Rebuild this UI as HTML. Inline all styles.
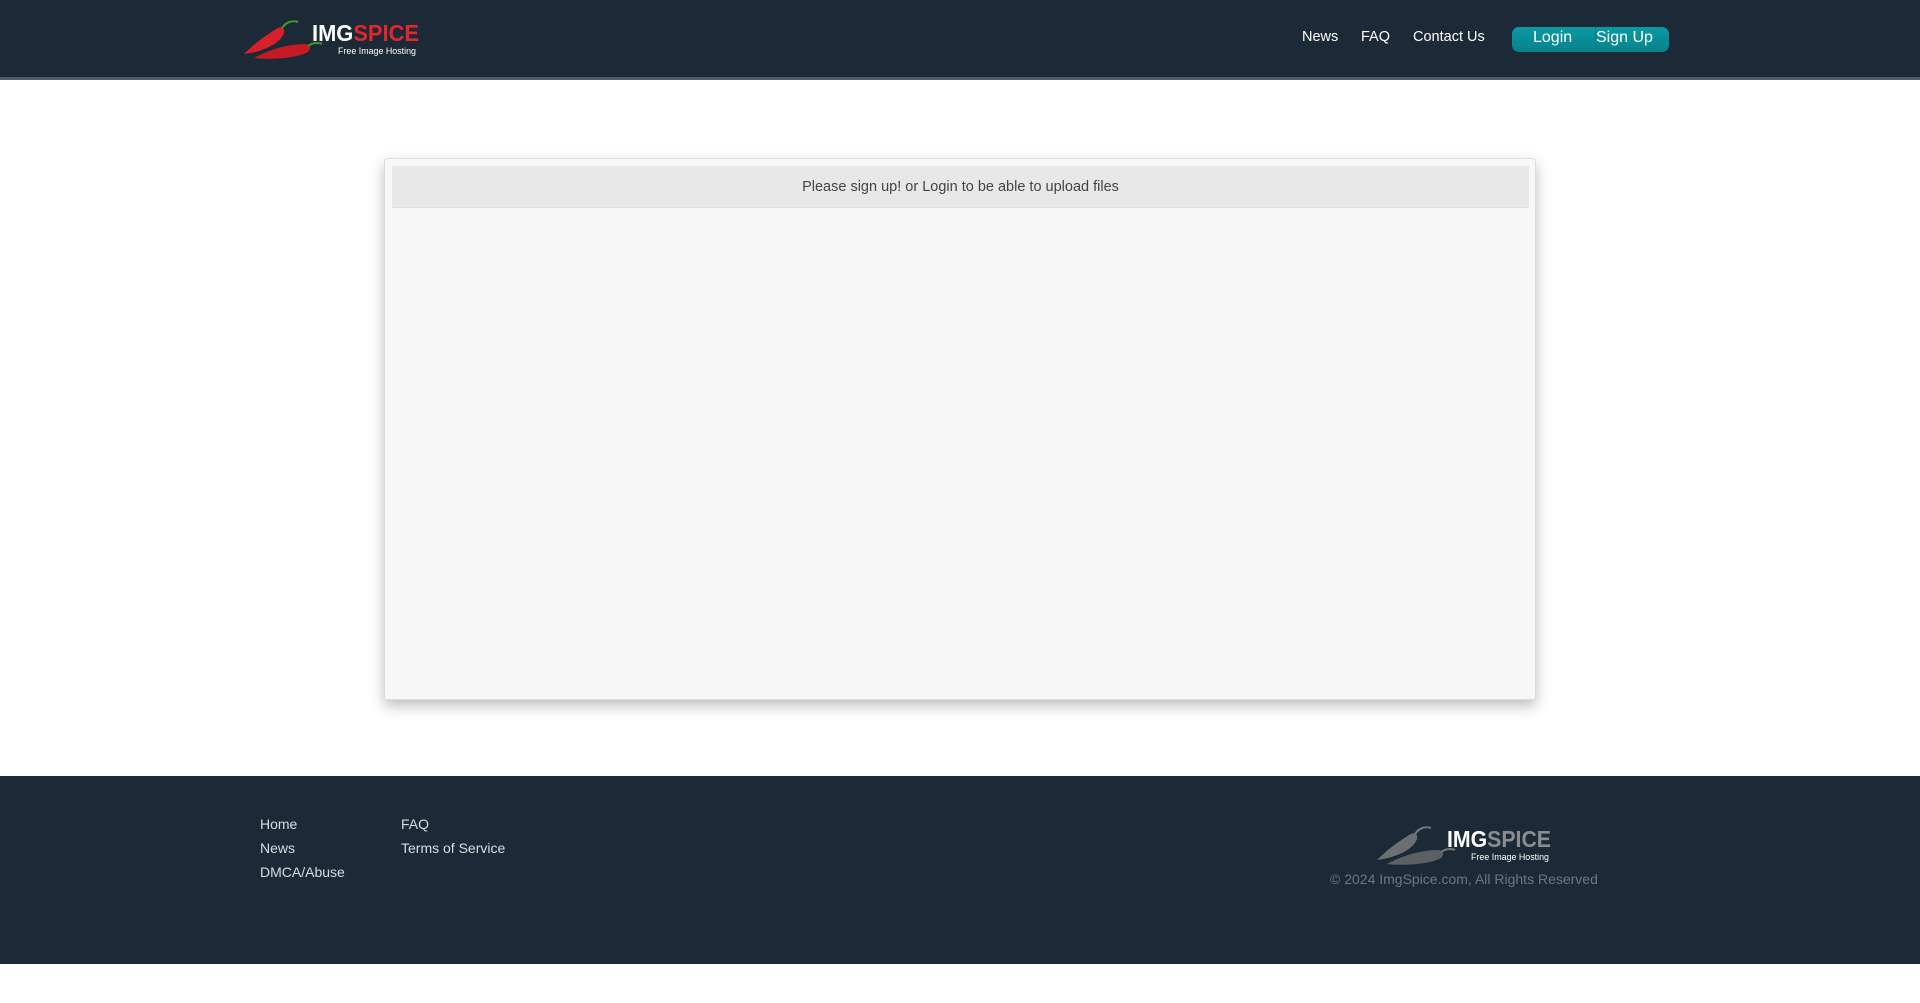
<!DOCTYPE html>
<html><head><meta charset="utf-8"><style>
*{margin:0;padding:0;box-sizing:border-box}
body{width:1920px;height:1003px;background:#fff;font-family:"Liberation Sans",sans-serif;position:relative;overflow:hidden}
.hdr{position:absolute;left:0;top:0;width:1920px;height:80px;background:#1b2a36;border-bottom:3px solid #4e5d68}
.nav{position:absolute;top:29px;color:#fff;font-size:14.5px}
.btns{position:absolute;left:1512px;top:27px;width:157px;height:25px;border-radius:7px;background:linear-gradient(#0a9aa4,#07828c);color:#fff;font-size:16px}
.btns span{position:absolute;top:2px}
.panel{position:absolute;left:384px;top:158px;width:1152px;height:542px;background:#f7f7f7;border:1px solid #ddd;border-radius:3px;box-shadow:0 6px 14px rgba(0,0,0,.25)}
.bar{position:absolute;left:7px;top:7px;width:1137px;height:42px;background:#e8e8e8;border-bottom:1px solid #e0e0e0;text-align:center;line-height:42px;font-size:14.5px;color:#444}
.ftr{position:absolute;left:0;top:776px;width:1920px;height:188px;background:#1b2a36}
.fl{position:absolute;color:#d8dde2;font-size:14px}
</style></head><body>
<div class="hdr">
<svg style="position:absolute;left:242px;top:18px" width="180" height="42" viewBox="0 0 180 42">
<path d="M2 36 C10 28 22 18 36 10 C40 8 43 10 42 15 C38 26 20 34 2 36Z" fill="#d8202a"/>
<path d="M12 40 C26 32 46 26 62 26 C68 26 70 30 66 34 C56 40 30 42 12 40Z" fill="#c41a22"/>
<path d="M40 10 C44 4 50 2 56 4" stroke="#3b9a2a" stroke-width="2" fill="none"/>
<path d="M66 28 C70 25 76 24 80 26" stroke="#3b9a2a" stroke-width="2" fill="none"/>
<text x="70" y="23" font-family="Liberation Sans" font-weight="bold" font-size="23" textLength="107" lengthAdjust="spacingAndGlyphs"><tspan fill="#fff">IMG</tspan><tspan fill="#e2262e">SPICE</tspan></text>
<text x="96" y="36" font-family="Liberation Sans" font-size="9" fill="#fff" textLength="78" lengthAdjust="spacingAndGlyphs">Free Image Hosting</text>
</svg>
<span class="nav" style="left:1302px">News</span>
<span class="nav" style="left:1361px">FAQ</span>
<span class="nav" style="left:1413px">Contact Us</span>
<div class="btns"><span style="left:21px">Login</span><span style="left:83px;border-left:1px solid #078088;height:21px;top:0"></span><span style="left:84px">Sign Up</span></div>
</div>
<div class="panel"><div class="bar">Please sign up! or Login to be able to upload files</div></div>
<div class="ftr">
<span class="fl" style="left:260px;top:40px">Home</span>
<span class="fl" style="left:260px;top:64px">News</span>
<span class="fl" style="left:260px;top:88px">DMCA/Abuse</span>
<span class="fl" style="left:401px;top:40px">FAQ</span>
<span class="fl" style="left:401px;top:64px">Terms of Service</span>
<svg style="position:absolute;left:1375px;top:48px" width="180" height="42" viewBox="0 0 180 42">
<path d="M2 36 C10 28 22 18 36 10 C40 8 43 10 42 15 C38 26 20 34 2 36Z" fill="#6d7073"/>
<path d="M12 40 C26 32 46 26 62 26 C68 26 70 30 66 34 C56 40 30 42 12 40Z" fill="#5d6063"/>
<path d="M40 10 C44 4 50 2 56 4" stroke="#777" stroke-width="2" fill="none"/>
<path d="M66 28 C70 25 76 24 80 26" stroke="#777" stroke-width="2" fill="none"/>
<text x="72" y="23" font-family="Liberation Sans" font-weight="bold" font-size="23" textLength="104" lengthAdjust="spacingAndGlyphs"><tspan fill="#fff">IMG</tspan><tspan fill="#8a8d90">SPICE</tspan></text>
<text x="96" y="36" font-family="Liberation Sans" font-size="9" fill="#fff" textLength="78" lengthAdjust="spacingAndGlyphs">Free Image Hosting</text>
</svg>
<span class="fl" style="left:1330px;top:95px;color:#6b7780">© 2024 ImgSpice.com, All Rights Reserved</span>
</div>
</body></html>
